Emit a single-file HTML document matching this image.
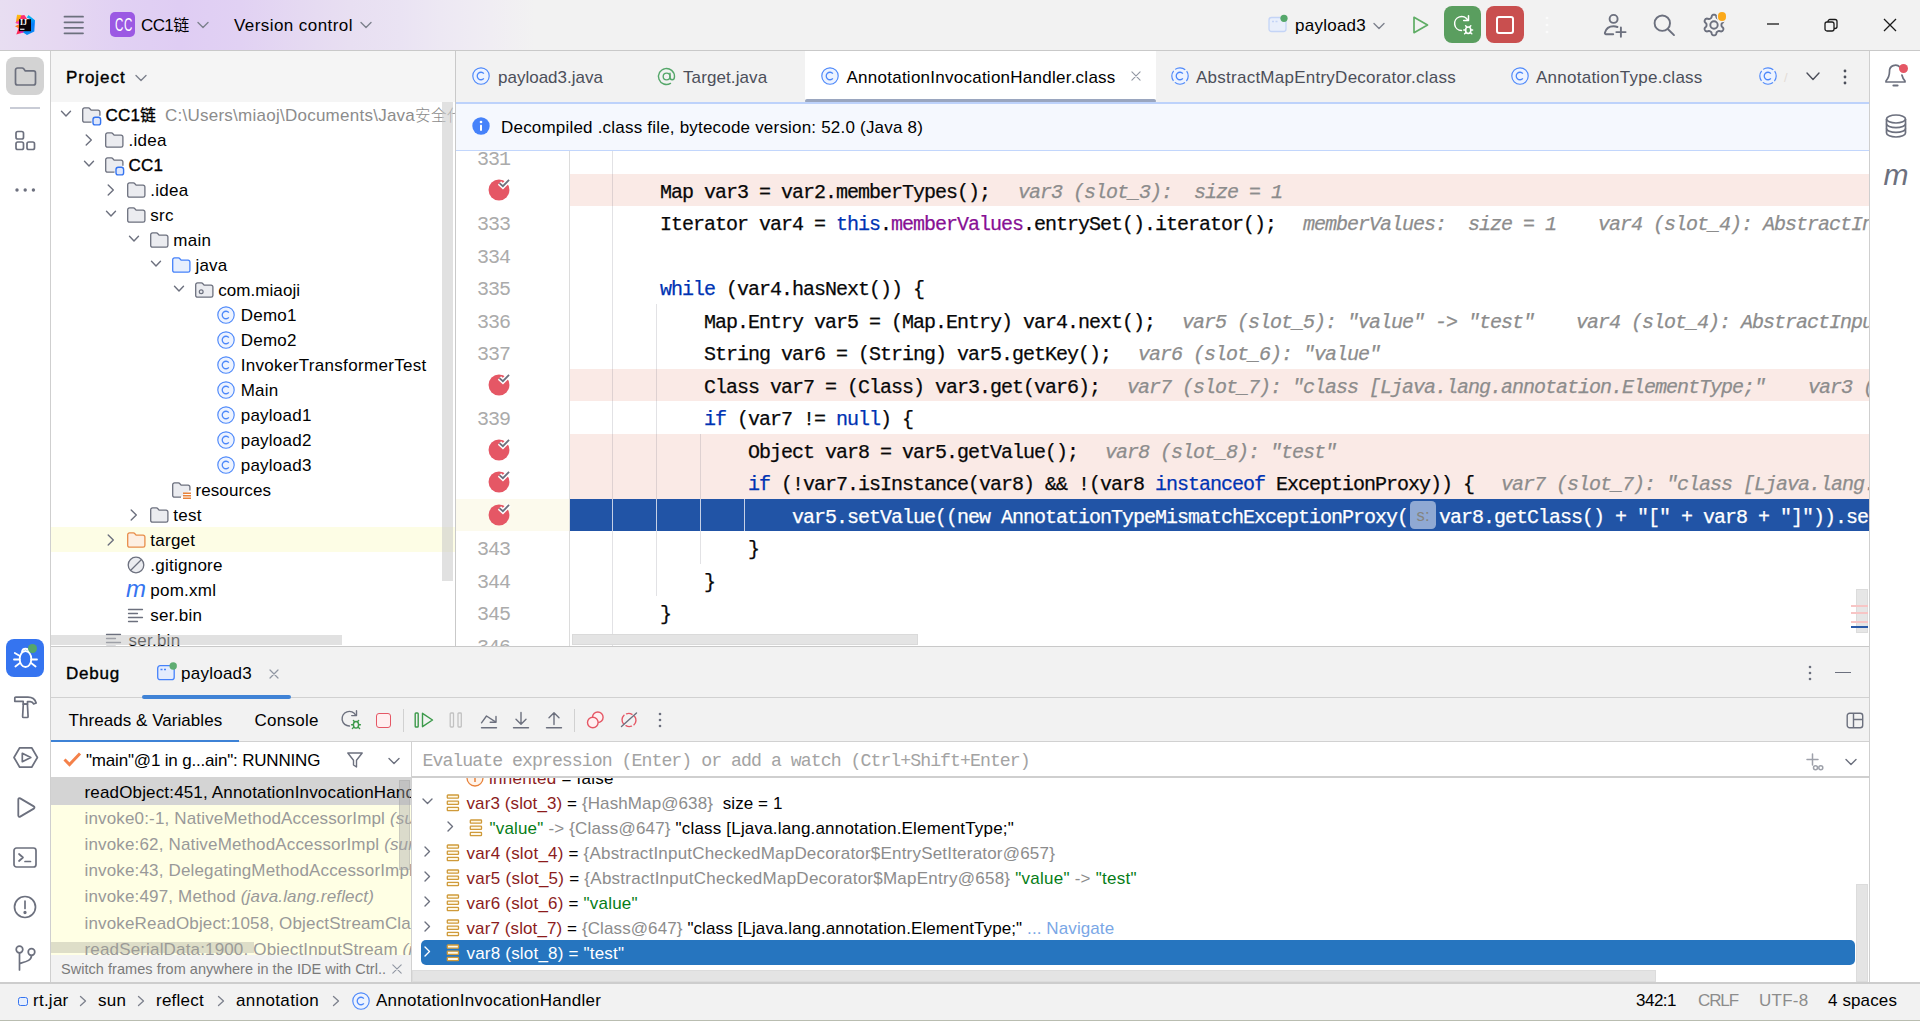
<!DOCTYPE html>
<html lang="en">
<head>
<meta charset="utf-8">
<title>CC1链 – AnnotationInvocationHandler.class</title>
<style>
*{box-sizing:border-box}
html,body{margin:0;padding:0}
body{width:1920px;height:1021px;overflow:hidden;position:relative;background:#fff;color:#000;
 font-family:"Liberation Sans","Noto Sans CJK SC",sans-serif;font-size:17px;letter-spacing:.25px;}
.abs{position:absolute}
.t{position:absolute;white-space:pre;line-height:25px;height:25px}
.b{font-weight:400;-webkit-text-stroke:.38px currentColor}
.mono{font-family:"Liberation Mono","Noto Sans CJK SC",monospace}
svg{position:absolute;overflow:visible}
/* title bar */
#title{left:0;top:0;width:1920px;height:50px;background:linear-gradient(90deg,#e8def2 0px,#e6d8f2 60px,#e1d1f3 120px,#dfcdf3 180px,#e1d1f3 240px,#e5d9f2 300px,#e8dff2 350px,#eae3f3 400px,#ede8f3 440px,#f0edf3 490px,#f2f2f2 535px,#f2f2f2 100%)}
#titleline{left:0;top:50px;width:1920px;height:1px;background:#c9c9c9}
/* left strip */
#lstrip{left:0;top:51px;width:50px;height:932px;background:#fff}
#lstripline{left:50px;top:51px;width:1px;height:932px;background:#cfcfcf}
/* project */
#phead{left:51px;top:51px;width:404px;height:51px;background:#f5f5f5}
#ptree{left:51px;top:102px;width:404px;height:544px;background:#fff;overflow:hidden}
#pline{left:455px;top:51px;width:1px;height:596px;background:#c9c9c9}
.row{position:absolute;left:0;width:404px;height:25px}
/* editor */
#tabs{left:456px;top:51px;width:1413px;height:51px;background:#f2f2f2}
#banner{left:456px;top:102px;width:1413px;height:49px;background:#f5f8fe;border-top:2px solid #bdd2fb;border-bottom:1px solid #c2d6fc}
#code{left:456px;top:151px;width:1413px;height:495px;background:#fff;overflow:hidden}
.cl{position:absolute;left:114px;width:1299px}
.ln{position:absolute;left:0;width:54px;text-align:right;color:#ababab;padding-top:2.500px;font-family:"Liberation Mono",monospace;font-size:20px;letter-spacing:-1px;white-space:pre}
.c{position:absolute;white-space:pre;font-family:"Liberation Mono",monospace;font-size:20px;letter-spacing:-1px;color:#080808;padding-top:2.500px;-webkit-text-stroke:.25px currentColor}
.k{color:#0033b3}.f{color:#871094}.h{color:#8c8c8c;font-style:italic}
.guide{position:absolute;width:1px;background:#dcdcdc}
/* right strip */
#rline{left:1869px;top:51px;width:1px;height:932px;background:#cfcfcf}
#rstrip{left:1870px;top:51px;width:50px;height:932px;background:#fff}
/* debug */
#dtop{left:51px;top:646px;width:1818px;height:1px;background:#c9c9c9}
#dhead{left:51px;top:647px;width:1818px;height:50px;background:#f2f2f2}
#dheadline{left:51px;top:697px;width:1818px;height:1px;background:#d1d1d1}
#dtool{left:51px;top:698px;width:1818px;height:43px;background:#f2f2f2}
#dtoolline{left:51px;top:741px;width:1818px;height:1px;background:#d1d1d1}
#dbody{left:51px;top:742px;width:1818px;height:240px;background:#fff;overflow:hidden}
/* status */
#sline{left:0;top:982px;width:1920px;height:1.700px;background:#cdcdcd;z-index:5}
#status{left:0;top:983px;width:1920px;height:38px;background:#f2f2f2}
.g{color:#8c8c8c}
.vn{color:#8c1c1c}.vs{color:#067d17}
</style>
</head>
<body>
<!-- ===== TITLE BAR ===== -->
<div id="title" class="abs">
 <!-- IJ logo -->
 <svg style="left:14px;top:14px" width="22" height="22" viewBox="0 0 22 22">
  <defs><linearGradient id="lgb" x1="0" y1="0" x2="0" y2="1"><stop offset="0" stop-color="#07c3f2"/><stop offset=".45" stop-color="#087cfa"/><stop offset="1" stop-color="#0a8af5"/></linearGradient>
  <linearGradient id="lgy" x1="0" y1="0" x2="0" y2="1"><stop offset="0" stop-color="#fdc20f"/><stop offset="1" stop-color="#fc801d"/></linearGradient></defs>
  <polygon points="3,.800 7.500,1 6,6 5.500,9.500 1.800,9.300" fill="url(#lgy)"/>
  <polygon points="7,1.600 10.300,1 13,4.800 5.500,6.500" fill="#fe2d6c"/>
  <polygon points="1.200,8.700 6,6 6,10.500" fill="#fb3bb5"/>
  <polygon points="1,12.300 6,9.800 6,15" fill="#fc7a1e"/>
  <polygon points="4.800,13.500 10,17 9,18.500 2.300,20.500" fill="#fe2857"/>
  <polygon points="6,17 10,17 9,18.800 6.500,19.200" fill="#e72ac0"/>
  <polygon points="12.800,3.500 14.500,1.100 21,6.300 20.300,17.400 13,21 8.800,18.300 12,16 16,5" fill="url(#lgb)"/>
  <rect x="5" y="5.200" width="12" height="12" fill="#0b0306"/>
  <text x="6" y="11.300" font-family="Liberation Serif,serif" font-weight="700" font-size="8" fill="#fff" letter-spacing="0">IJ</text>
  <rect x="6.100" y="14.700" width="4.400" height="1.100" fill="#fff"/>
 </svg>
 <!-- hamburger -->
 <svg style="left:63px;top:14px" width="22" height="22" viewBox="0 0 22 22" fill="none" stroke="#6c707e" stroke-width="1.800" stroke-linecap="round">
  <path d="M1.5 2.7H20M1.5 8.3H20M1.5 13.8H20M1.5 19.3H20"/>
 </svg>
 <!-- CC badge -->
 <div class="abs" style="left:109.5px;top:12px;width:25px;height:25px;border-radius:5px;background:#9b59e3"></div>
 <div class="t b" style="left:109.5px;top:12px;width:25px;text-align:center;color:#fff;font-size:17.500px;letter-spacing:1px;transform:scaleX(.66);font-weight:400;-webkit-text-stroke:0;padding-left:1px;top:12.500px">CC</div>
 <div class="t" style="left:141px;top:12.500px;letter-spacing:-.6px">CC1<span style="letter-spacing:0;font-size:16px">链</span></div>
 <svg style="left:197px;top:21px" width="12" height="8" viewBox="0 0 12 8" fill="none" stroke="#7d818d" stroke-width="1.4" stroke-linecap="round" stroke-linejoin="round"><path d="M1 1.5 6 6.5 11 1.5"/></svg>
 <div class="t" style="letter-spacing:0.43px;left:234px;top:12.500px">Version control</div>
 <svg style="left:360px;top:21px" width="12" height="8" viewBox="0 0 12 8" fill="none" stroke="#7d818d" stroke-width="1.4" stroke-linecap="round" stroke-linejoin="round"><path d="M1 1.5 6 6.5 11 1.5"/></svg>

 <!-- run config -->
 <svg style="left:1268px;top:14px" width="22" height="22" viewBox="0 0 22 22" fill="none">
  <rect x="1" y="3.5" width="17" height="14" rx="2.5" fill="#e9effb" stroke="#c4d4f6" stroke-width="1.3"/>
  <path d="M4 7.5h2M7.5 7.5h2" stroke="#c4d4f6" stroke-width="1.3"/>
  <circle cx="16" cy="4.3" r="3.6" fill="#55a76a"/>
 </svg>
 <div class="t" style="left:1295px;top:12.500px">payload3</div>
 <svg style="left:1373px;top:22px" width="12" height="8" viewBox="0 0 12 8" fill="none" stroke="#7d818d" stroke-width="1.4" stroke-linecap="round" stroke-linejoin="round"><path d="M1 1.5 6 6.5 11 1.5"/></svg>
 <!-- run -->
 <svg style="left:1410px;top:14px" width="22" height="22" viewBox="0 0 22 22" fill="none" stroke="#5fad65" stroke-width="1.7" stroke-linejoin="round"><path d="M4 3.3 17.5 11 4 18.7Z"/></svg>
 <!-- debug button (green) -->
 <div class="abs" style="left:1444px;top:6px;width:37px;height:37px;border-radius:8px;background:#5a9e5f"></div>
 <svg style="left:1452px;top:13px" width="24" height="24" viewBox="0 0 24 24" fill="none" stroke="#fff" stroke-width="1.5" stroke-linecap="round" stroke-linejoin="round">
  <path d="M9.5 17.5A7 7 0 1 1 15.8 7.2"/><path d="M16.5 2.8v4.8h-4.8"/>
  <ellipse cx="16.2" cy="17.2" rx="2.6" ry="3.2"/><path d="M14.6 13.8l-1-1M17.8 13.8l1-1M13.6 17h-1.8M18.8 17h1.8M14 19.6l-1.4 1.2M18.4 19.6l1.4 1.2"/>
 </svg>
 <!-- stop button (red) -->
 <div class="abs" style="left:1486px;top:6px;width:38px;height:37px;border-radius:8px;background:#c94f4f"></div>
 <div class="abs" style="left:1496px;top:16px;width:18px;height:18px;border-radius:3px;border:2px solid #fff"></div>
 <!-- kebab faded -->
 <svg style="left:1544px;top:15px" width="6" height="20" viewBox="0 0 6 20" fill="#fbfbfb"><circle cx="3" cy="3" r="1.3"/><circle cx="3" cy="10" r="1.3"/><circle cx="3" cy="17" r="1.3"/></svg>
 <!-- add user -->
 <svg style="left:1601px;top:11px" width="28" height="28" viewBox="0 0 28 28" fill="none" stroke="#6c707e" stroke-width="1.900" stroke-linecap="round" stroke-linejoin="round">
  <circle cx="12.600" cy="7.900" r="4"/><path d="M12.200 23.200H5c-.8 0-1.300-.7-1.100-1.500 1-3.900 4.300-6.500 8.700-6.500 1.400 0 2.700.3 3.900.8"/><path d="M19.900 16.400v9.300M15.300 21.100h9.300"/>
 </svg>
 <!-- search -->
 <svg style="left:1650px;top:11px" width="28" height="28" viewBox="0 0 28 28" fill="none" stroke="#6c707e" stroke-width="1.900" stroke-linecap="round"><circle cx="12.300" cy="12.200" r="7.700"/><path d="M18 18.200 24 24.100"/></svg>
 <!-- gear -->
 <svg style="left:1701.500px;top:12.700px" width="24" height="24" viewBox="0 0 24 24" fill="none" stroke="#6c707e" stroke-width="1.900" stroke-linejoin="round">
  <circle cx="12" cy="12" r="3.700"/>
  <path d="M19.45 12.00 19.46 11.51 19.53 11.01 19.83 10.44 20.60 9.70 21.29 8.85 21.43 8.09 21.26 7.43 20.96 6.83 20.59 6.26 20.10 5.79 19.38 5.53 18.29 5.71 17.27 6.00 16.62 5.98 16.15 5.78 15.73 5.55 15.31 5.30 14.91 4.99 14.57 4.44 14.30 3.40 13.91 2.37 13.33 1.88 12.68 1.70 12.00 1.65 11.32 1.70 10.67 1.88 10.09 2.37 9.70 3.40 9.43 4.44 9.09 4.99 8.69 5.30 8.28 5.55 7.85 5.78 7.38 5.98 6.73 6.00 5.71 5.71 4.62 5.53 3.90 5.79 3.41 6.26 3.04 6.83 2.74 7.43 2.57 8.09 2.71 8.85 3.40 9.70 4.17 10.44 4.47 11.01 4.54 11.51 4.55 12.00 4.54 12.49 4.47 12.99 4.17 13.56 3.40 14.30 2.71 15.15 2.57 15.91 2.74 16.57 3.04 17.17 3.41 17.74 3.90 18.21 4.62 18.47 5.71 18.29 6.73 18.00 7.38 18.02 7.85 18.22 8.27 18.45 8.69 18.70 9.09 19.01 9.43 19.56 9.70 20.60 10.09 21.63 10.67 22.12 11.32 22.30 12.00 22.35 12.68 22.30 13.33 22.12 13.91 21.63 14.30 20.60 14.57 19.56 14.91 19.01 15.31 18.70 15.73 18.45 16.15 18.22 16.62 18.02 17.27 18.00 18.29 18.29 19.38 18.47 20.10 18.21 20.59 17.74 20.96 17.18 21.26 16.57 21.43 15.91 21.29 15.15 20.60 14.30 19.83 13.56 19.53 12.99 19.46 12.49Z"/>
 </svg>
 <div class="abs" style="left:1717.500px;top:12.300px;width:8.800px;height:8.800px;border-radius:50%;background:#fba91a;box-shadow:0 0 0 1.200px #f2f2f2"></div>
 <!-- window controls -->
 <svg style="left:1766px;top:18px" width="14" height="14" viewBox="0 0 14 14" stroke="#1a1a1a" stroke-width="1.300" fill="none"><path d="M1 6h12"/></svg>
 <svg style="left:1824px;top:18px" width="14" height="14" viewBox="0 0 14 14" stroke="#1a1a1a" stroke-width="1.300" fill="none"><rect x="1" y="4" width="9" height="9" rx="2"/><path d="M4 4V3.500a2 2 0 0 1 2-2h5a2 2 0 0 1 2 2v5a2 2 0 0 1-2 2h-1"/></svg>
 <svg style="left:1883px;top:18px" width="14" height="14" viewBox="0 0 14 14" stroke="#1a1a1a" stroke-width="1.300" fill="none"><path d="M1 1 13 13M13 1 1 13"/></svg>
</div>
<div id="titleline" class="abs"></div>
<!-- ===== LEFT STRIP ===== -->
<div id="lstrip" class="abs"></div><div id="lstripline" class="abs"></div>
<!-- ===== PROJECT ===== -->
<div id="phead" class="abs"><div class="t b" style="left:15px;top:13.500px;letter-spacing:.95px">Project</div><svg style="left:84px;top:23px" width="12" height="8" viewBox="0 0 12 8" fill="none" stroke="#7d818d" stroke-width="1.400" stroke-linecap="round" stroke-linejoin="round"><path d="M1 1.500 6 6.500 11 1.500"/></svg></div>
<div id="ptree" class="abs">
<svg style="left:8.95px;top:8.40px" width="12" height="8" viewBox="0 0 12 8" fill="none" stroke="#6c707e" stroke-width="1.400" stroke-linecap="round" stroke-linejoin="round"><path d="M1.500 1.300 6 6.100 10.500 1.300"/></svg>
<svg style="left:31.099999999999994px;top:5px" width="20" height="19" viewBox="0 0 20 19" fill="#ebecf0" stroke="#6c707e" stroke-width="1.300" stroke-linejoin="round"><path d="M9.500 15.200H2.500a1.800 1.800 0 0 1-1.800-1.800V2.700a1.800 1.800 0 0 1 1.800-1.800h3.900c.5 0 1 .200 1.300.6l1.400 1.700h7a1.800 1.800 0 0 1 1.800 1.800v3.700"/><rect x="11" y="10.300" width="7.600" height="7.600" rx="2.200" fill="#dfe7fb" stroke="#3574f0" stroke-width="1.400"/></svg>
<div class="t b" style="left:54.39999999999999px;top:1px">CC1<span style="font-size:15.500px">链</span></div>
<div class="t g" style="left:114px;top:1px;color:#8c8c8c">C:\Users\miaoj\Documents\Java<span style="font-size:15.500px;font-weight:300;letter-spacing:.5px">安全代码</span></div>
<svg style="left:33.70px;top:31.95px" width="8" height="12" viewBox="0 0 8 12" fill="none" stroke="#6c707e" stroke-width="1.400" stroke-linecap="round" stroke-linejoin="round"><path d="M1.200 1 6.300 6 1.200 11"/></svg>
<svg style="left:54.2px;top:30px" width="19" height="17" viewBox="0 0 19 17" fill="#ebecf0" stroke="#6c707e" stroke-width="1.300" stroke-linejoin="round"><path d="M.700 2.700a1.800 1.800 0 0 1 1.800-1.800h3.900c.5 0 1 .200 1.300.6l1.400 1.700h7a1.800 1.800 0 0 1 1.800 1.800v8.400a1.800 1.800 0 0 1-1.800 1.800H2.500a1.800 1.800 0 0 1-1.800-1.800z"/></svg>
<div class="t" style="left:77.5px;top:26px">.idea</div>
<svg style="left:32.05px;top:58.40px" width="12" height="8" viewBox="0 0 12 8" fill="none" stroke="#6c707e" stroke-width="1.400" stroke-linecap="round" stroke-linejoin="round"><path d="M1.500 1.300 6 6.100 10.500 1.300"/></svg>
<svg style="left:54.2px;top:55px" width="20" height="19" viewBox="0 0 20 19" fill="#ebecf0" stroke="#6c707e" stroke-width="1.300" stroke-linejoin="round"><path d="M9.500 15.200H2.500a1.800 1.800 0 0 1-1.800-1.800V2.700a1.800 1.800 0 0 1 1.800-1.800h3.900c.5 0 1 .200 1.300.6l1.400 1.700h7a1.800 1.800 0 0 1 1.800 1.800v3.700"/><rect x="11" y="10.300" width="7.600" height="7.600" rx="2.200" fill="#dfe7fb" stroke="#3574f0" stroke-width="1.400"/></svg>
<div class="t b" style="left:77.5px;top:51px">CC1</div>
<svg style="left:55.50px;top:81.95px" width="8" height="12" viewBox="0 0 8 12" fill="none" stroke="#6c707e" stroke-width="1.400" stroke-linecap="round" stroke-linejoin="round"><path d="M1.200 1 6.300 6 1.200 11"/></svg>
<svg style="left:76px;top:80px" width="19" height="17" viewBox="0 0 19 17" fill="#ebecf0" stroke="#6c707e" stroke-width="1.300" stroke-linejoin="round"><path d="M.700 2.700a1.800 1.800 0 0 1 1.800-1.800h3.900c.5 0 1 .200 1.300.6l1.400 1.700h7a1.800 1.800 0 0 1 1.800 1.800v8.400a1.800 1.800 0 0 1-1.800 1.800H2.500a1.800 1.800 0 0 1-1.800-1.800z"/></svg>
<div class="t" style="left:99.3px;top:76px">.idea</div>
<svg style="left:53.85px;top:108.40px" width="12" height="8" viewBox="0 0 12 8" fill="none" stroke="#6c707e" stroke-width="1.400" stroke-linecap="round" stroke-linejoin="round"><path d="M1.500 1.300 6 6.100 10.500 1.300"/></svg>
<svg style="left:76px;top:105px" width="19" height="17" viewBox="0 0 19 17" fill="#ebecf0" stroke="#6c707e" stroke-width="1.300" stroke-linejoin="round"><path d="M.700 2.700a1.800 1.800 0 0 1 1.800-1.800h3.900c.5 0 1 .200 1.300.6l1.400 1.700h7a1.800 1.800 0 0 1 1.800 1.800v8.400a1.800 1.800 0 0 1-1.800 1.800H2.500a1.800 1.800 0 0 1-1.800-1.800z"/></svg>
<div class="t" style="left:99.3px;top:101px">src</div>
<svg style="left:76.85px;top:133.40px" width="12" height="8" viewBox="0 0 12 8" fill="none" stroke="#6c707e" stroke-width="1.400" stroke-linecap="round" stroke-linejoin="round"><path d="M1.500 1.300 6 6.100 10.500 1.300"/></svg>
<svg style="left:99px;top:130px" width="19" height="17" viewBox="0 0 19 17" fill="#ebecf0" stroke="#6c707e" stroke-width="1.300" stroke-linejoin="round"><path d="M.700 2.700a1.800 1.800 0 0 1 1.800-1.800h3.900c.5 0 1 .200 1.300.6l1.400 1.700h7a1.800 1.800 0 0 1 1.800 1.800v8.400a1.800 1.800 0 0 1-1.800 1.800H2.500a1.800 1.800 0 0 1-1.800-1.800z"/></svg>
<div class="t" style="left:122.3px;top:126px">main</div>
<svg style="left:98.95px;top:158.40px" width="12" height="8" viewBox="0 0 12 8" fill="none" stroke="#6c707e" stroke-width="1.400" stroke-linecap="round" stroke-linejoin="round"><path d="M1.500 1.300 6 6.100 10.500 1.300"/></svg>
<svg style="left:121.1px;top:155px" width="19" height="17" viewBox="0 0 19 17" fill="#e7effd" stroke="#4682fa" stroke-width="1.300" stroke-linejoin="round"><path d="M.700 2.700a1.800 1.800 0 0 1 1.800-1.800h3.900c.5 0 1 .200 1.300.6l1.400 1.700h7a1.800 1.800 0 0 1 1.800 1.800v8.400a1.800 1.800 0 0 1-1.800 1.800H2.500a1.800 1.800 0 0 1-1.800-1.800z"/></svg>
<div class="t" style="left:144.4px;top:151px">java</div>
<svg style="left:121.85px;top:183.40px" width="12" height="8" viewBox="0 0 12 8" fill="none" stroke="#6c707e" stroke-width="1.400" stroke-linecap="round" stroke-linejoin="round"><path d="M1.500 1.300 6 6.100 10.500 1.300"/></svg>
<svg style="left:144px;top:180px" width="19" height="17" viewBox="0 0 19 17" fill="#ebecf0" stroke="#6c707e" stroke-width="1.300" stroke-linejoin="round"><path d="M.700 2.700a1.800 1.800 0 0 1 1.800-1.800h3.900c.5 0 1 .200 1.300.6l1.400 1.700h7a1.800 1.800 0 0 1 1.800 1.800v8.400a1.800 1.800 0 0 1-1.800 1.800H2.500a1.800 1.800 0 0 1-1.800-1.800z"/><circle cx="6.200" cy="9.800" r="1.900" fill="none" stroke-width="1.200"/></svg>
<div class="t" style="letter-spacing:0.05px;left:167.3px;top:176px">com.miaoji</div>
<svg style="left:166.4px;top:203.7px" width="18" height="18" viewBox="0 0 18 18" fill="none"><circle cx="9" cy="9" r="8.200" fill="#edf3ff" stroke="#4d88fa" stroke-width="1.150"/><path d="M11.850 6.600A3.750 3.750 0 1 0 11.850 11.400" stroke="#4d88fa" stroke-width="1.300" fill="none"/></svg>
<div class="t" style="left:189.70000000000002px;top:201px">Demo1</div>
<svg style="left:166.4px;top:228.7px" width="18" height="18" viewBox="0 0 18 18" fill="none"><circle cx="9" cy="9" r="8.200" fill="#edf3ff" stroke="#4d88fa" stroke-width="1.150"/><path d="M11.850 6.600A3.750 3.750 0 1 0 11.850 11.400" stroke="#4d88fa" stroke-width="1.300" fill="none"/></svg>
<div class="t" style="left:189.70000000000002px;top:226px">Demo2</div>
<svg style="left:166.4px;top:253.7px" width="18" height="18" viewBox="0 0 18 18" fill="none"><circle cx="9" cy="9" r="8.200" fill="#edf3ff" stroke="#4d88fa" stroke-width="1.150"/><path d="M11.850 6.600A3.750 3.750 0 1 0 11.850 11.400" stroke="#4d88fa" stroke-width="1.300" fill="none"/></svg>
<div class="t" style="letter-spacing:0.32px;left:189.70000000000002px;top:251px">InvokerTransformerTest</div>
<svg style="left:166.4px;top:278.7px" width="18" height="18" viewBox="0 0 18 18" fill="none"><circle cx="9" cy="9" r="8.200" fill="#edf3ff" stroke="#4d88fa" stroke-width="1.150"/><path d="M11.850 6.600A3.750 3.750 0 1 0 11.850 11.400" stroke="#4d88fa" stroke-width="1.300" fill="none"/></svg>
<div class="t" style="left:189.70000000000002px;top:276px">Main</div>
<svg style="left:166.4px;top:303.7px" width="18" height="18" viewBox="0 0 18 18" fill="none"><circle cx="9" cy="9" r="8.200" fill="#edf3ff" stroke="#4d88fa" stroke-width="1.150"/><path d="M11.850 6.600A3.750 3.750 0 1 0 11.850 11.400" stroke="#4d88fa" stroke-width="1.300" fill="none"/></svg>
<div class="t" style="left:189.70000000000002px;top:301px">payload1</div>
<svg style="left:166.4px;top:328.7px" width="18" height="18" viewBox="0 0 18 18" fill="none"><circle cx="9" cy="9" r="8.200" fill="#edf3ff" stroke="#4d88fa" stroke-width="1.150"/><path d="M11.850 6.600A3.750 3.750 0 1 0 11.850 11.400" stroke="#4d88fa" stroke-width="1.300" fill="none"/></svg>
<div class="t" style="left:189.70000000000002px;top:326px">payload2</div>
<svg style="left:166.4px;top:353.7px" width="18" height="18" viewBox="0 0 18 18" fill="none"><circle cx="9" cy="9" r="8.200" fill="#edf3ff" stroke="#4d88fa" stroke-width="1.150"/><path d="M11.850 6.600A3.750 3.750 0 1 0 11.850 11.400" stroke="#4d88fa" stroke-width="1.300" fill="none"/></svg>
<div class="t" style="left:189.70000000000002px;top:351px">payload3</div>
<svg style="left:121.1px;top:380px" width="20" height="19" viewBox="0 0 20 19" fill="#ebecf0" stroke="#6c707e" stroke-width="1.300" stroke-linejoin="round"><path d="M9 15.200H2.500a1.800 1.800 0 0 1-1.800-1.800V2.700a1.800 1.800 0 0 1 1.800-1.800h3.900c.5 0 1 .200 1.300.6l1.400 1.700h7a1.800 1.800 0 0 1 1.800 1.800v3.400"/><path d="M11 11.300h8M11 13.800h8M11 16.300h8" stroke="#e8823a" stroke-width="1.400" fill="none"/></svg>
<div class="t" style="letter-spacing:0.12px;left:144.4px;top:376px">resources</div>
<svg style="left:78.50px;top:406.95px" width="8" height="12" viewBox="0 0 8 12" fill="none" stroke="#6c707e" stroke-width="1.400" stroke-linecap="round" stroke-linejoin="round"><path d="M1.200 1 6.300 6 1.200 11"/></svg>
<svg style="left:99px;top:405px" width="19" height="17" viewBox="0 0 19 17" fill="#ebecf0" stroke="#6c707e" stroke-width="1.300" stroke-linejoin="round"><path d="M.700 2.700a1.800 1.800 0 0 1 1.800-1.800h3.900c.5 0 1 .200 1.300.6l1.400 1.700h7a1.800 1.800 0 0 1 1.800 1.800v8.400a1.800 1.800 0 0 1-1.800 1.800H2.500a1.800 1.800 0 0 1-1.800-1.800z"/></svg>
<div class="t" style="left:122.3px;top:401px">test</div>
<div class="row" style="top:425px;background:#fdfde5"></div>
<svg style="left:55.50px;top:431.95px" width="8" height="12" viewBox="0 0 8 12" fill="none" stroke="#6c707e" stroke-width="1.400" stroke-linecap="round" stroke-linejoin="round"><path d="M1.200 1 6.300 6 1.200 11"/></svg>
<svg style="left:76px;top:430px" width="19" height="17" viewBox="0 0 19 17" fill="#fdefe2" stroke="#e88d4a" stroke-width="1.300" stroke-linejoin="round"><path d="M.700 2.700a1.800 1.800 0 0 1 1.800-1.800h3.900c.5 0 1 .200 1.300.6l1.400 1.700h7a1.800 1.800 0 0 1 1.800 1.800v8.400a1.800 1.800 0 0 1-1.800 1.800H2.500a1.800 1.800 0 0 1-1.800-1.800z"/></svg>
<div class="t" style="left:99.3px;top:426px">target</div>
<svg style="left:76px;top:453.6px" width="18" height="18" viewBox="0 0 18 18" fill="#ebecf0" stroke="#6c707e" stroke-width="1.300"><circle cx="9" cy="9" r="7.800"/><path d="M3.500 14.500 14.500 3.500"/></svg>
<div class="t" style="left:99.3px;top:451px">.gitignore</div>
<div class="t" style="left:75px;top:474px;color:#3574f0;font-style:italic;font-size:24px;letter-spacing:0;font-family:'Liberation Sans',sans-serif">m</div>
<div class="t" style="left:99.3px;top:476px">pom.xml</div>
<svg style="left:76px;top:506px" width="18" height="15" viewBox="0 0 18 15" fill="none" stroke="#6c707e" stroke-width="1.300" stroke-linecap="round"><path d="M1.500 1.500h14M1.500 5.500h9M1.500 9.500h14M1.500 13.500h9"/></svg>
<div class="t" style="left:99.3px;top:501px">ser.bin</div>
<svg style="left:54.2px;top:531px" width="18" height="15" viewBox="0 0 18 15" fill="none" stroke="#6c707e" stroke-width="1.300" stroke-linecap="round"><path d="M1.500 1.500h14M1.500 5.500h9M1.500 9.500h14M1.500 13.500h9"/></svg>
<div class="t" style="left:77.5px;top:526px">ser.bin</div>
<div class="abs" style="left:391px;top:0;width:11px;height:479px;background:rgba(200,200,200,.55)"></div>
<div class="abs" style="left:0;top:532.500px;width:291px;height:10.500px;background:rgba(200,200,200,.55)"></div>
</div>
<div id="pline" class="abs"></div>
<!-- ===== LEFT STRIP ICONS ===== -->
<div class="abs" style="left:6px;top:57px;width:38px;height:38px;border-radius:8px;background:#d3d3d3"></div>
<svg style="left:14px;top:66px" width="23" height="21" viewBox="0 0 23 21" fill="none" stroke="#6c707e" stroke-width="1.700" stroke-linejoin="round"><path d="M1.500 4a2 2 0 0 1 2-2h4.600c.6 0 1.200.3 1.600.8l1.600 2.100h8.200a2 2 0 0 1 2 2v10.100a2 2 0 0 1-2 2H3.500a2 2 0 0 1-2-2z"/></svg>
<div class="abs" style="left:10px;top:107px;width:30px;height:1.500px;background:#c9ccd6"></div>
<svg style="left:14px;top:130px" width="24" height="22" viewBox="0 0 24 22" fill="none" stroke="#6c707e" stroke-width="1.700"><rect x="2" y="1.500" width="7.500" height="7.500" rx="1.800"/><rect x="2" y="12" width="7.500" height="7.500" rx="1.800"/><rect x="13" y="12" width="7.500" height="7.500" rx="1.800"/></svg>
<svg style="left:14px;top:187px" width="24" height="6" viewBox="0 0 24 6" fill="#6c707e"><circle cx="3" cy="3" r="1.700"/><circle cx="11.200" cy="3" r="1.700"/><circle cx="19.400" cy="3" r="1.700"/></svg>
<!-- debug button -->
<div class="abs" style="left:6px;top:639px;width:38px;height:38px;border-radius:8px;background:#3574f0"></div>
<svg style="left:13px;top:646px" width="25" height="25" viewBox="0 0 25 25" fill="none" stroke="#fff" stroke-width="1.800" stroke-linecap="round">
 <path d="M9 5.500a3.600 3.600 0 0 1 7 0"/><ellipse cx="12.500" cy="13" rx="5.800" ry="8"/><path d="M6.900 10 1.800 7M6.700 13.500H1M6.900 17l-4.500 3.500M18.100 13.500H24M18.100 17l4.500 3.500"/>
</svg>

<div class="abs" style="left:27.500px;top:643.500px;width:9px;height:9px;border-radius:50%;background:#55a76a"></div>
<!-- hammer -->
<svg style="left:13px;top:695px" width="26" height="26" viewBox="0 0 26 26" fill="none" stroke="#6c707e" stroke-width="1.700" stroke-linejoin="round" stroke-linecap="round"><path d="M1.800 6.300V3.200c0-.6.400-1 1-1H15c4 0 7 2 8.200 5.800l-2.600.9c-.7-1.500-1.800-2.300-3.400-2.300h-2.700v2.600h-4.300V6.300z"/><path d="M10.300 9.200h4.100l.7 12.300c0 .6-.4 1-1 1h-3.500c-.6 0-1-.4-1-1z"/></svg>
<!-- services -->
<svg style="left:12px;top:745px" width="28" height="26" viewBox="0 0 28 26" fill="none" stroke="#6c707e" stroke-width="1.700" stroke-linejoin="round"><path d="M2 12.500 7.700 2.800h12l5.700 9.700-5.700 9.700h-12z"/><path d="M10.300 8.300 18.800 12.500l-8.500 4.200z"/></svg>
<!-- run -->
<svg style="left:15px;top:795px" width="24" height="26" viewBox="0 0 24 26" fill="none" stroke="#6c707e" stroke-width="1.800" stroke-linejoin="round"><path d="M3.300 4.500c0-1 1-1.600 1.900-1.100l13.600 8c.9.500.9 1.700 0 2.200l-13.600 8c-.9.500-1.900-.1-1.900-1.100z"/></svg>
<!-- terminal -->
<svg style="left:12px;top:846px" width="26" height="24" viewBox="0 0 26 24" fill="none" stroke="#6c707e" stroke-width="1.700" stroke-linejoin="round" stroke-linecap="round"><rect x="2" y="2" width="22" height="19" rx="2.500"/><path d="M7 8l4 3.500L7 15M13 15.500h5.500"/></svg>
<!-- problems -->
<svg style="left:12px;top:894px" width="26" height="26" viewBox="0 0 26 26" fill="none" stroke="#6c707e" stroke-width="1.700" stroke-linecap="round"><circle cx="13" cy="13" r="10.500"/><path d="M13 7v7.500"/><circle cx="13" cy="18.500" r=".8" fill="#6c707e"/></svg>
<!-- git -->
<svg style="left:13px;top:944px" width="26" height="28" viewBox="0 0 26 28" fill="none" stroke="#6c707e" stroke-width="1.700" stroke-linecap="round"><circle cx="6.500" cy="5.500" r="3.300"/><circle cx="18.500" cy="8" r="3.300"/><path d="M6.500 9v17M18.500 11.500c0 5-5 6-12 8"/></svg>

<!-- ===== RIGHT STRIP ===== -->
<div id="rline" class="abs"></div><div id="rstrip" class="abs"></div>
<svg style="left:1884px;top:63px" width="24" height="26" viewBox="0 0 24 26" fill="none" stroke="#6c707e" stroke-width="1.700" stroke-linejoin="round" stroke-linecap="round"><path d="M16 4.200A6 6 0 0 0 5.500 8.500c0 4.500-1.800 7.500-3.500 9.500v1h19v-1c-1.200-1.400-2.500-3.300-3.100-6"/><path d="M9.500 22.500h4" stroke-width="2.200"/></svg>
<div class="abs" style="left:1898.500px;top:63.500px;width:9px;height:9px;border-radius:50%;background:#e55765"></div>
<svg style="left:1884px;top:113px" width="24" height="26" viewBox="0 0 24 26" fill="none" stroke="#6c707e" stroke-width="1.700"><ellipse cx="12" cy="6" rx="9.500" ry="4"/><path d="M2.500 6v14c0 2.200 4.300 4 9.500 4s9.500-1.800 9.500-4V6"/><path d="M2.500 10.700c0 2.200 4.300 4 9.500 4s9.500-1.800 9.500-4M2.500 15.400c0 2.200 4.300 4 9.500 4s9.500-1.800 9.500-4"/></svg>
<div class="t" style="left:1883.500px;top:159.500px;width:28px;color:#6c707e;font-style:italic;font-size:30px;letter-spacing:0;line-height:30px;height:30px">m</div>
<!-- ===== EDITOR TABS ===== -->
<div id="tabs" class="abs">
<svg style="left:16px;top:16px;opacity:1" width="18" height="18" viewBox="0 0 18 18" fill="none"><circle cx="9" cy="9" r="8.200" fill="#edf3ff" stroke="#4d88fa" stroke-width="1.150"/><path d="M11.850 6.600A3.750 3.750 0 1 0 11.850 11.400" stroke="#4d88fa" stroke-width="1.300" fill="none"/></svg>
<div class="t" style="letter-spacing:0.0px;left:42px;top:13.500px;color:#4c4f5a">payload3.java</div>
<svg style="left:201px;top:15.500px" width="19" height="19" viewBox="0 0 19 19" fill="none" stroke="#55a76a" stroke-width="1.400" stroke-linecap="round"><path d="M13.500 16.400A8 8 0 1 1 17.500 9.500c0 2-.9 3.300-2.300 3.300s-2.200-1-2.200-2.500V6.300"/><circle cx="9.600" cy="9.500" r="3.400"/></svg>
<div class="t" style="letter-spacing:0.1px;left:227px;top:13.500px;color:#4c4f5a">Target.java</div>
<div class="abs" style="left:349px;top:0;width:351px;height:49px;background:#fff"></div>
<div class="abs" style="left:349px;top:48px;width:351px;height:3.500px;border-radius:2px;background:#9aa6bf"></div>
<svg style="left:365px;top:16px;opacity:1" width="18" height="18" viewBox="0 0 18 18" fill="none"><circle cx="9" cy="9" r="8.200" fill="#edf3ff" stroke="#4d88fa" stroke-width="1.150"/><path d="M11.850 6.600A3.750 3.750 0 1 0 11.850 11.400" stroke="#4d88fa" stroke-width="1.300" fill="none"/></svg>
<div class="t" style="left:390.500px;top:13.500px;color:#000">AnnotationInvocationHandler.class</div>
<svg style="left:675.300px;top:20.200px" width="10" height="10" viewBox="0 0 11 11" stroke="#9096a2" stroke-width="1.200" fill="none" stroke-linecap="round"><path d="M1 1 10 10M10 1 1 10"/></svg>
<svg style="left:715px;top:16px;opacity:1" width="18" height="18" viewBox="0 0 18 18" fill="none"><circle cx="9" cy="9" r="8.200" fill="#edf3ff" stroke="#4d88fa" stroke-width="1.150" stroke-dasharray="10.880 2" stroke-dashoffset="5.440"/><path d="M11.850 6.600A3.750 3.750 0 1 0 11.850 11.400" stroke="#4d88fa" stroke-width="1.300" fill="none"/></svg>
<div class="t" style="left:740px;top:13.500px;color:#4c4f5a">AbstractMapEntryDecorator.class</div>
<svg style="left:1055px;top:16px;opacity:1" width="18" height="18" viewBox="0 0 18 18" fill="none"><circle cx="9" cy="9" r="8.200" fill="#edf3ff" stroke="#4d88fa" stroke-width="1.150"/><path d="M11.850 6.600A3.750 3.750 0 1 0 11.850 11.400" stroke="#4d88fa" stroke-width="1.300" fill="none"/></svg>
<div class="t" style="left:1080px;top:13.500px;color:#4c4f5a">AnnotationType.class</div>
<svg style="left:1303px;top:16px;opacity:1" width="18" height="18" viewBox="0 0 18 18" fill="none"><circle cx="9" cy="9" r="8.200" fill="#edf3ff" stroke="#4d88fa" stroke-width="1.150" stroke-dasharray="10.880 2" stroke-dashoffset="5.440"/><path d="M11.850 6.600A3.750 3.750 0 1 0 11.850 11.400" stroke="#4d88fa" stroke-width="1.300" fill="none"/></svg>
<div class="t" style="left:1328px;top:13.500px;color:#e3dcd6;font-size:13px">/</div>
<svg style="left:1350px;top:21px" width="14" height="9" viewBox="0 0 14 9" fill="none" stroke="#4c4f5a" stroke-width="1.400" stroke-linecap="round" stroke-linejoin="round"><path d="M1 1 7 7.500 13 1"/></svg>
<svg style="left:1386px;top:18px" width="6" height="16" viewBox="0 0 6 16" fill="#4c4f5a"><circle cx="3" cy="2" r="1.400"/><circle cx="3" cy="8" r="1.400"/><circle cx="3" cy="14" r="1.400"/></svg>
</div>
<!-- ===== BANNER ===== -->
<div id="banner" class="abs">
<svg style="left:16px;top:12.700px" width="18" height="18" viewBox="0 0 18 18"><circle cx="9" cy="9" r="8.700" fill="#4682fa"/><rect x="8" y="7.800" width="2" height="6" rx=".5" fill="#fff"/><circle cx="9" cy="5" r="1.300" fill="#fff"/></svg>
<div class="t" style="left:45px;top:10.500px;letter-spacing:.2px">Decompiled .class file, bytecode version: 52.0 (Java 8)</div>
</div>
<!-- ===== CODE ===== -->
<div id="code" class="abs">
<div class="abs" style="left:113px;top:23px;width:1300px;height:32px;background:#faeae6"></div>
<div class="abs" style="left:113px;top:218px;width:1300px;height:32px;background:#faeae6"></div>
<div class="abs" style="left:113px;top:283px;width:1300px;height:32px;background:#faeae6"></div>
<div class="abs" style="left:113px;top:315px;width:1300px;height:33px;background:#faeae6"></div>
<div class="abs" style="left:0;top:348px;width:113px;height:32px;background:#fcfaed"></div>
<div class="abs" style="left:114px;top:348px;width:1300px;height:32px;background:#2154a6"></div>
<div class="guide" style="left:113px;top:0;height:495px;background:#dcdcdc"></div>
<div class="guide" style="left:156px;top:-10px;height:553px;background:rgba(120,120,130,.21)"></div>
<div class="guide" style="left:200px;top:153px;height:292px;background:rgba(120,120,130,.21)"></div>
<div class="guide" style="left:244px;top:283px;height:130px;background:rgba(120,120,130,.21)"></div>
<div class="guide" style="left:156px;top:348px;height:32px;background:#c5d0e6"></div>
<div class="guide" style="left:200px;top:348px;height:32px;background:#c5d0e6"></div>
<div class="guide" style="left:244px;top:348px;height:32px;background:#c5d0e6"></div>
<div class="guide" style="left:288px;top:348px;height:32px;background:#c5d0e6"></div>
<div class="ln" style="top:-10px;line-height:32.500px;height:32.500px">331</div>
<svg style="left:31.15px;top:26.85px" width="24" height="24" viewBox="0 0 24 24"><circle cx="12" cy="12" r="10.450" fill="#e55765"/><path d="M12.450 5.050 15.900 8.250 22.050 1.950" fill="none" stroke="#fff" stroke-width="4.800" stroke-linecap="butt" stroke-linejoin="miter"/><path d="M12.450 5.050 15.900 8.250 22.050 1.950" fill="none" stroke="#6c707e" stroke-width="1.800"/></svg>
<div class="ln" style="top:55px;line-height:32.500px;height:32.500px">333</div>
<div class="ln" style="top:88px;line-height:32.500px;height:32.500px">334</div>
<div class="ln" style="top:120px;line-height:32.500px;height:32.500px">335</div>
<div class="ln" style="top:153px;line-height:32.500px;height:32.500px">336</div>
<div class="ln" style="top:185px;line-height:32.500px;height:32.500px">337</div>
<svg style="left:31.15px;top:221.85px" width="24" height="24" viewBox="0 0 24 24"><circle cx="12" cy="12" r="10.450" fill="#e55765"/><path d="M12.450 5.050 15.900 8.250 22.050 1.950" fill="none" stroke="#fff" stroke-width="4.800" stroke-linecap="butt" stroke-linejoin="miter"/><path d="M12.450 5.050 15.900 8.250 22.050 1.950" fill="none" stroke="#6c707e" stroke-width="1.800"/></svg>
<div class="ln" style="top:250px;line-height:32.500px;height:32.500px">339</div>
<svg style="left:31.15px;top:286.85px" width="24" height="24" viewBox="0 0 24 24"><circle cx="12" cy="12" r="10.450" fill="#e55765"/><path d="M12.450 5.050 15.900 8.250 22.050 1.950" fill="none" stroke="#fff" stroke-width="4.800" stroke-linecap="butt" stroke-linejoin="miter"/><path d="M12.450 5.050 15.900 8.250 22.050 1.950" fill="none" stroke="#6c707e" stroke-width="1.800"/></svg>
<svg style="left:31.15px;top:318.85px" width="24" height="24" viewBox="0 0 24 24"><circle cx="12" cy="12" r="10.450" fill="#e55765"/><path d="M12.450 5.050 15.900 8.250 22.050 1.950" fill="none" stroke="#fff" stroke-width="4.800" stroke-linecap="butt" stroke-linejoin="miter"/><path d="M12.450 5.050 15.900 8.250 22.050 1.950" fill="none" stroke="#6c707e" stroke-width="1.800"/></svg>
<svg style="left:31.15px;top:351.85px" width="24" height="24" viewBox="0 0 24 24"><circle cx="12" cy="12" r="10.450" fill="#e55765"/><path d="M12.450 5.050 15.900 8.250 22.050 1.950" fill="none" stroke="#fff" stroke-width="4.800" stroke-linecap="butt" stroke-linejoin="miter"/><path d="M12.450 5.050 15.900 8.250 22.050 1.950" fill="none" stroke="#6c707e" stroke-width="1.800"/></svg>
<div class="ln" style="top:380px;line-height:32.500px;height:32.500px">343</div>
<div class="ln" style="top:413px;line-height:32.500px;height:32.500px">344</div>
<div class="ln" style="top:445px;line-height:32.500px;height:32.500px">345</div>
<div class="ln" style="top:478px;line-height:32.500px;height:32.500px">346</div>
<div class="c" style="left:204px;top:23px;line-height:32.500px;height:32.500px">Map var3 = var2.memberTypes();</div>
<div class="c h" style="left:562px;top:23px;line-height:32.500px;height:32.500px">var3 (slot_3):  size = 1</div>
<div class="c" style="left:204px;top:55px;line-height:32.500px;height:32.500px">Iterator var4 = </div>
<div class="c k" style="left:380px;top:55px;line-height:32.500px;height:32.500px">this</div>
<div class="c" style="left:424px;top:55px;line-height:32.500px;height:32.500px">.</div>
<div class="c f" style="left:435px;top:55px;line-height:32.500px;height:32.500px">memberValues</div>
<div class="c" style="left:567px;top:55px;line-height:32.500px;height:32.500px">.entrySet().iterator();</div>
<div class="c h" style="left:847px;top:55px;line-height:32.500px;height:32.500px">memberValues:  size = 1</div>
<div class="c h" style="left:1142px;top:55px;line-height:32.500px;height:32.500px">var4 (slot_4): AbstractInputCheckedMapDecorator$EntrySetIterator@657</div>
<div class="c k" style="left:204px;top:120px;line-height:32.500px;height:32.500px">while</div>
<div class="c" style="left:270px;top:120px;line-height:32.500px;height:32.500px">(var4.hasNext()) {</div>
<div class="c" style="left:248px;top:153px;line-height:32.500px;height:32.500px">Map.Entry var5 = (Map.Entry) var4.next();</div>
<div class="c h" style="left:726px;top:153px;line-height:32.500px;height:32.500px">var5 (slot_5): "value" -&gt; "test"</div>
<div class="c h" style="left:1120px;top:153px;line-height:32.500px;height:32.500px">var4 (slot_4): AbstractInputCheckedMapDecorator$EntrySetIterator@657</div>
<div class="c" style="left:248px;top:185px;line-height:32.500px;height:32.500px">String var6 = (String) var5.getKey();</div>
<div class="c h" style="left:682px;top:185px;line-height:32.500px;height:32.500px">var6 (slot_6): "value"</div>
<div class="c" style="left:248px;top:218px;line-height:32.500px;height:32.500px">Class var7 = (Class) var3.get(var6);</div>
<div class="c h" style="left:671px;top:218px;line-height:32.500px;height:32.500px">var7 (slot_7): "class [Ljava.lang.annotation.ElementType;"</div>
<div class="c h" style="left:1352px;top:218px;line-height:32.500px;height:32.500px">var3 (slot_3):  size = 1</div>
<div class="c k" style="left:248px;top:250px;line-height:32.500px;height:32.500px">if</div>
<div class="c" style="left:281px;top:250px;line-height:32.500px;height:32.500px">(var7 != </div>
<div class="c k" style="left:380px;top:250px;line-height:32.500px;height:32.500px">null</div>
<div class="c" style="left:424px;top:250px;line-height:32.500px;height:32.500px">) {</div>
<div class="c" style="left:292px;top:283px;line-height:32.500px;height:32.500px">Object var8 = var5.getValue();</div>
<div class="c h" style="left:649px;top:283px;line-height:32.500px;height:32.500px">var8 (slot_8): "test"</div>
<div class="c k" style="left:292px;top:315px;line-height:32.500px;height:32.500px">if</div>
<div class="c" style="left:325px;top:315px;line-height:32.500px;height:32.500px">(!var7.isInstance(var8) &amp;&amp; !(var8 </div>
<div class="c k" style="left:699px;top:315px;line-height:32.500px;height:32.500px">instanceof</div>
<div class="c" style="left:820px;top:315px;line-height:32.500px;height:32.500px">ExceptionProxy)) {</div>
<div class="c h" style="left:1045px;top:315px;line-height:32.500px;height:32.500px">var7 (slot_7): "class [Ljava.lang.annotation.ElementType;"</div>
<div class="c" style="left:336px;top:348px;line-height:32.500px;height:32.500px;color:#fff">var5.setValue((new AnnotationTypeMismatchExceptionProxy(</div>
<div class="c" style="left:983px;top:348px;line-height:32.500px;height:32.500px;color:#fff">var8.getClass() + "[" + var8 + "]")).setMember(var2.members().get(var6)));</div>
<div class="c" style="left:292px;top:380px;line-height:32.500px;height:32.500px">}</div>
<div class="c" style="left:248px;top:413px;line-height:32.500px;height:32.500px">}</div>
<div class="c" style="left:204px;top:445px;line-height:32.500px;height:32.500px">}</div>
<div class="abs" style="left:953.7px;top:350.1px;width:26.100px;height:27.600px;border-radius:4.500px;background:#90a9d3"></div>
<div class="t" style="left:960.5px;top:351.8px;font-size:16.500px;color:#84847f;letter-spacing:.3px">s:</div>
<div class="abs" style="left:116px;top:483px;width:346px;height:10.500px;background:#e4e4e4;border:1px solid #dadada"></div>
<div class="abs" style="left:1400px;top:438px;width:12px;height:44px;background:#e6e6e6;border:1px solid #dcdcdc"></div>
<div class="abs" style="left:1395px;top:454.29999999999995px;width:17px;height:2px;background:#f7c5c5"></div>
<div class="abs" style="left:1395px;top:461.29999999999995px;width:17px;height:2px;background:#f7c5c5"></div>
<div class="abs" style="left:1395px;top:470.29999999999995px;width:17px;height:2px;background:#f7c5c5"></div>
<div class="abs" style="left:1395px;top:474.5px;width:17px;height:2.500px;background:#2b5aa8"></div>
</div>
<!-- ===== DEBUG PANEL ===== -->
<div id="dtop" class="abs"></div>
<div id="dhead" class="abs">
<div class="t b" style="left:15px;top:13.5px;letter-spacing:.75px">Debug</div>
<svg style="left:105px;top:15px" width="22" height="20" viewBox="0 0 22 20" fill="none"><rect x="1.700" y="3.700" width="16.500" height="14" rx="2.500" fill="#e4ecfd" stroke="#4682fa" stroke-width="1.300"/><path d="M4.500 7.500h2M8 7.500h2" stroke="#4682fa" stroke-width="1.300"/><circle cx="17.200" cy="4" r="3.700" fill="#5fad72"/></svg>
<div class="t" style="left:130px;top:13.5px">payload3</div>
<svg style="left:217.5px;top:22px" width="10" height="10" viewBox="0 0 10 10" stroke="#9096a2" stroke-width="1.200" fill="none" stroke-linecap="round"><path d="M1 1 9 9M9 1 1 9"/></svg>
<div class="abs" style="left:91px;top:47.89999999999998px;width:149px;height:4.200px;border-radius:2.100px;background:#4083d6;z-index:2"></div>
<svg style="left:1756px;top:18px" width="6" height="16" viewBox="0 0 6 16" fill="#6c707e"><circle cx="3" cy="2" r="1.300"/><circle cx="3" cy="8" r="1.300"/><circle cx="3" cy="14" r="1.300"/></svg>
<div class="abs" style="left:1784px;top:25.200000000000045px;width:16px;height:1.200px;background:#6c707e"></div>
</div>
<div id="dheadline" class="abs"></div>
<div id="dtool" class="abs">
<div class="t" style="left:17.5px;top:9.5px;letter-spacing:.05px">Threads &amp; Variables</div>
<div class="t" style="left:203.5px;top:9.5px">Console</div>
<div class="abs" style="left:0;top:41.5px;width:188px;height:2.500px;background:#3d82d6;z-index:2"></div>
<svg style="left:290px;top:11px" width="22" height="22" viewBox="0 0 22 22" fill="none" stroke="#6c707e" stroke-width="1.400" stroke-linecap="round" stroke-linejoin="round"><path d="M8.500 17A7.300 7.300 0 1 1 14.800 6.300"/><path d="M15.500 1.800v4.800h-4.800"/><g stroke="#3c9a4b"><ellipse cx="15" cy="15.800" rx="2.600" ry="3.300"/><path d="M13.400 12.600l-1-1M16.600 12.600l1-1M12.400 15.800h-1.800M17.600 15.800h1.800M12.800 18.300l-1.400 1.200M17.200 18.300l1.400 1.200"/></g></svg>
<div class="abs" style="left:324.5px;top:14.5px;width:15px;height:15px;border-radius:3px;border:1.500px solid #e55765;background:#ffeff0"></div>
<div class="abs" style="left:352px;top:10.5px;width:1px;height:23px;background:#d1d1d1"></div>
<svg style="left:363px;top:13px" width="20" height="18" viewBox="0 0 20 18" fill="none" stroke="#3c9a4b" stroke-width="1.400" stroke-linejoin="round"><rect x="1.200" y="2" width="3" height="14" rx=".8"/><path d="M8.500 2.300 18.500 9 8.500 15.700z"/></svg>
<svg style="left:398px;top:13px" width="14" height="18" viewBox="0 0 14 18" fill="none" stroke="#c2c2c2" stroke-width="1.300"><rect x="1.200" y="2" width="3.300" height="14" rx=".8"/><rect x="9" y="2" width="3.300" height="14" rx=".8"/></svg>
<svg style="left:429px;top:13px" width="18" height="18" viewBox="0 0 18 18" fill="none" stroke="#6c707e" stroke-width="1.400" stroke-linecap="round" stroke-linejoin="round"><path d="M1.500 11.800 6.500 5 15.500 10.800"/><path d="M16 5.500v5.800h-5.800"/><path d="M1.500 16.800h15"/></svg>
<svg style="left:461px;top:13px" width="18" height="18" viewBox="0 0 18 18" fill="none" stroke="#6c707e" stroke-width="1.400" stroke-linecap="round" stroke-linejoin="round"><path d="M9 1.500v11.500M4 8.200l5 5 5-5M1.500 16.800h15"/></svg>
<svg style="left:494px;top:13px" width="18" height="18" viewBox="0 0 18 18" fill="none" stroke="#6c707e" stroke-width="1.400" stroke-linecap="round" stroke-linejoin="round"><path d="M9 13.500V2M4 6.800l5-5 5 5M1.500 16.800h15"/></svg>
<div class="abs" style="left:523px;top:10.5px;width:1px;height:23px;background:#d1d1d1"></div>
<svg style="left:535px;top:12px" width="20" height="20" viewBox="0 0 20 20" fill="#fff0f1" stroke="#e55765" stroke-width="1.400"><circle cx="11.800" cy="7.300" r="5.300"/><circle cx="6.800" cy="12.500" r="5.300"/></svg>
<svg style="left:568px;top:12px" width="20" height="20" viewBox="0 0 20 20" fill="none" stroke="#e55765" stroke-width="1.400" stroke-linecap="round"><path d="M5 5.200A6.300 6.300 0 0 0 4.500 13.800M15 14.800A6.300 6.300 0 0 0 15.500 6.200" /><path d="M7.500 3.800A6.300 6.300 0 0 1 13 4.300M12.500 16.200A6.300 6.300 0 0 1 7 15.700"/><path d="M2.500 16.500 17.500 3" stroke="#6c707e"/></svg>
<svg style="left:606px;top:14px" width="6" height="16" viewBox="0 0 6 16" fill="#6c707e"><circle cx="3" cy="2" r="1.300"/><circle cx="3" cy="8" r="1.300"/><circle cx="3" cy="14" r="1.300"/></svg>
<svg style="left:1795px;top:14px" width="18" height="17" viewBox="0 0 18 17" fill="none" stroke="#6c707e" stroke-width="1.400"><rect x="1.200" y="1.200" width="15.500" height="14.500" rx="2.500"/><path d="M7.500 1.200v14.500M7.500 7.500h9"/></svg>
</div>
<div id="dtoolline" class="abs"></div>
<div id="dbody" class="abs">
<svg style="left:12px;top:9px" width="19" height="17" viewBox="0 0 19 17" fill="none" stroke="#f26522" stroke-width="3" stroke-linejoin="miter"><path d="M1.500 8.500 6.500 13.500 17 2.500" stroke="#f4814a"/></svg>
<div class="t" style="left:35px;top:5.5px;letter-spacing:-.18px">"main"@1 in g...ain": RUNNING</div>
<svg style="left:295px;top:9px" width="18" height="18" viewBox="0 0 18 18" fill="none" stroke="#6c707e" stroke-width="1.400" stroke-linejoin="round"><path d="M1.800 2h14.400L10.500 9.300V16L7.500 14V9.300z"/></svg>
<svg style="left:337px;top:15px" width="12" height="8" viewBox="0 0 12 8" fill="none" stroke="#6c707e" stroke-width="1.400" stroke-linecap="round" stroke-linejoin="round"><path d="M1 1.500 6 6.500 11 1.500"/></svg>
<div class="abs" style="left:0;top:35px;width:360px;height:28px;background:#d4d4d4"></div>
<div class="abs" style="left:0;top:63px;width:360px;height:150px;background:#ffffe4"></div>
<div class="abs" style="left:0;top:36px;width:360px;height:177px;overflow:hidden">
<div class="t" style="left:33.5px;top:1.60px;color:#000;height:26px;line-height:26px;letter-spacing:.16px">readObject:451, AnnotationInvocationHandler <i>(sun.reflect.annotation)</i></div>
<div class="t" style="left:33.5px;top:27.82px;color:#999;height:26px;line-height:26px;letter-spacing:.16px">invoke0:-1, NativeMethodAccessorImpl <i>(sun.reflect)</i></div>
<div class="t" style="left:33.5px;top:54.04px;color:#999;height:26px;line-height:26px;letter-spacing:.16px">invoke:62, NativeMethodAccessorImpl <i>(sun.reflect)</i></div>
<div class="t" style="left:33.5px;top:80.26px;color:#999;height:26px;line-height:26px;letter-spacing:.16px">invoke:43, DelegatingMethodAccessorImpl <i>(sun.reflect)</i></div>
<div class="t" style="left:33.5px;top:106.48px;color:#999;height:26px;line-height:26px;letter-spacing:.16px">invoke:497, Method <i>(java.lang.reflect)</i></div>
<div class="t" style="left:33.5px;top:132.70px;color:#999;height:26px;line-height:26px;letter-spacing:.16px">invokeReadObject:1058, ObjectStreamClass <i>(java.io)</i></div>
<div class="t" style="left:33.5px;top:158.92px;color:#999;height:26px;line-height:26px;letter-spacing:.16px">readSerialData:1900, ObjectInputStream <i>(java.io)</i></div>
</div>
<div class="abs" style="left:348px;top:37.5px;width:11px;height:90px;background:rgba(170,170,170,.42);border:1px solid rgba(150,150,150,.25)"></div>
<div class="abs" style="left:0;top:200.29999999999995px;width:203px;height:10.600px;background:rgba(160,160,150,.35)"></div>
<div class="abs" style="left:0;top:213px;width:360px;height:27px;background:#f2f2f2"></div>
<div class="t" style="left:10px;top:214.5px;color:#7a7a7a;font-size:14.500px;letter-spacing:.040px">Switch frames from anywhere in the IDE with Ctrl..</div>
<svg style="left:340.5px;top:222px" width="10" height="10" viewBox="0 0 10 10" stroke="#9096a2" stroke-width="1.100" fill="none" stroke-linecap="round"><path d="M.8.800 9.200 9.200M9.200.8.800 9.200"/></svg>
<div class="abs" style="left:360px;top:0;width:1px;height:240px;background:#d1d1d1"></div>
<div class="t mono" style="left:371.5px;top:7.2000000000000455px;color:#a3a3a3;font-size:18.200px;letter-spacing:-.960px">Evaluate expression (Enter) or add a watch (Ctrl+Shift+Enter)</div>
<svg style="left:1754px;top:10px" width="20" height="20" viewBox="0 0 20 20" fill="none" stroke="#9ea1aa" stroke-width="1.500" stroke-linecap="round"><path d="M7.500 2v11M2 7.500h11"/><circle cx="10.500" cy="15.800" r="2"/><circle cx="15.800" cy="15.800" r="2"/></svg>
<svg style="left:1794px;top:16px" width="12" height="8" viewBox="0 0 12 8" fill="none" stroke="#6c707e" stroke-width="1.400" stroke-linecap="round" stroke-linejoin="round"><path d="M1 1.500 6 6.500 11 1.500"/></svg>
<div class="abs" style="left:361px;top:34.299999999999955px;width:1457px;height:2px;background:#cfcfcf;z-index:3"></div>
<div class="abs" style="left:0;top:36px;width:1818px;height:204px;overflow:hidden">
<svg style="left:415px;top:-9.0px" width="18" height="18" viewBox="0 0 18 18" fill="#fff4eb" stroke="#e8823a" stroke-width="1.300"><circle cx="9" cy="9" r="8"/><path d="M9 5v8" stroke-width="1.500"/></svg>
<div class="t" style="left:438px;top:-12.5px"><span class="vn">inherited</span> = false</div>
<svg style="left:370.5px;top:20.3px" width="11" height="7" viewBox="0 0 11 7" fill="none" stroke="#6c707e" stroke-width="1.400" stroke-linecap="round" stroke-linejoin="round"><path d="M1 1 5.500 5.500 10 1"/></svg>
<svg style="left:395px;top:15.5px" width="15" height="18" viewBox="0 0 15 18" fill="#fff8e6" stroke="#cf9a3a" stroke-width="1.300"><rect x="1.300" y="1" width="11.200" height="3.200" rx=".6"/><rect x="1.300" y="7.200" width="11.200" height="3.200" rx=".6"/><rect x="1.300" y="13.400" width="11.200" height="3.200" rx=".6"/></svg>
<div class="t" style="left:415.5px;top:12.5px;letter-spacing:0.1px;"><span class="vn">var3 (slot_3)</span> = <span class="g">{HashMap@638}</span>  size = 1</div>
<svg style="left:395.5px;top:43.3px" width="7" height="11" viewBox="0 0 7 11" fill="none" stroke="#6c707e" stroke-width="1.400" stroke-linecap="round" stroke-linejoin="round"><path d="M1 1 5.500 5.500 1 10"/></svg>
<svg style="left:417.5px;top:40.5px" width="15" height="18" viewBox="0 0 15 18" fill="#fff8e6" stroke="#cf9a3a" stroke-width="1.300"><rect x="1.300" y="1" width="11.200" height="3.200" rx=".6"/><rect x="1.300" y="7.200" width="11.200" height="3.200" rx=".6"/><rect x="1.300" y="13.400" width="11.200" height="3.200" rx=".6"/></svg>
<div class="t" style="left:438.5px;top:37.5px;letter-spacing:0.18px;"><span class="vs">"value"</span> <span class="g">-&gt; {Class@647}</span> "class [Ljava.lang.annotation.ElementType;"</div>
<svg style="left:372.5px;top:68.3px" width="7" height="11" viewBox="0 0 7 11" fill="none" stroke="#6c707e" stroke-width="1.400" stroke-linecap="round" stroke-linejoin="round"><path d="M1 1 5.500 5.500 1 10"/></svg>
<svg style="left:395px;top:65.5px" width="15" height="18" viewBox="0 0 15 18" fill="#fff8e6" stroke="#cf9a3a" stroke-width="1.300"><rect x="1.300" y="1" width="11.200" height="3.200" rx=".6"/><rect x="1.300" y="7.200" width="11.200" height="3.200" rx=".6"/><rect x="1.300" y="13.400" width="11.200" height="3.200" rx=".6"/></svg>
<div class="t" style="left:415.5px;top:62.5px;letter-spacing:0.2px;"><span class="vn">var4 (slot_4)</span> = <span class="g">{AbstractInputCheckedMapDecorator$EntrySetIterator@657}</span></div>
<svg style="left:372.5px;top:93.3px" width="7" height="11" viewBox="0 0 7 11" fill="none" stroke="#6c707e" stroke-width="1.400" stroke-linecap="round" stroke-linejoin="round"><path d="M1 1 5.500 5.500 1 10"/></svg>
<svg style="left:395px;top:90.5px" width="15" height="18" viewBox="0 0 15 18" fill="#fff8e6" stroke="#cf9a3a" stroke-width="1.300"><rect x="1.300" y="1" width="11.200" height="3.200" rx=".6"/><rect x="1.300" y="7.200" width="11.200" height="3.200" rx=".6"/><rect x="1.300" y="13.400" width="11.200" height="3.200" rx=".6"/></svg>
<div class="t" style="left:415.5px;top:87.5px;letter-spacing:0.25px;"><span class="vn">var5 (slot_5)</span> = <span class="g">{AbstractInputCheckedMapDecorator$MapEntry@658}</span> <span class="vs">"value"</span> <span class="g">-&gt;</span> <span class="vs">"test"</span></div>
<svg style="left:372.5px;top:118.3px" width="7" height="11" viewBox="0 0 7 11" fill="none" stroke="#6c707e" stroke-width="1.400" stroke-linecap="round" stroke-linejoin="round"><path d="M1 1 5.500 5.500 1 10"/></svg>
<svg style="left:395px;top:115.5px" width="15" height="18" viewBox="0 0 15 18" fill="#fff8e6" stroke="#cf9a3a" stroke-width="1.300"><rect x="1.300" y="1" width="11.200" height="3.200" rx=".6"/><rect x="1.300" y="7.200" width="11.200" height="3.200" rx=".6"/><rect x="1.300" y="13.400" width="11.200" height="3.200" rx=".6"/></svg>
<div class="t" style="left:415.5px;top:112.5px;letter-spacing:0.2px;"><span class="vn">var6 (slot_6)</span> = <span class="vs">"value"</span></div>
<svg style="left:372.5px;top:143.3px" width="7" height="11" viewBox="0 0 7 11" fill="none" stroke="#6c707e" stroke-width="1.400" stroke-linecap="round" stroke-linejoin="round"><path d="M1 1 5.500 5.500 1 10"/></svg>
<svg style="left:395px;top:140.5px" width="15" height="18" viewBox="0 0 15 18" fill="#fff8e6" stroke="#cf9a3a" stroke-width="1.300"><rect x="1.300" y="1" width="11.200" height="3.200" rx=".6"/><rect x="1.300" y="7.200" width="11.200" height="3.200" rx=".6"/><rect x="1.300" y="13.400" width="11.200" height="3.200" rx=".6"/></svg>
<div class="t" style="left:415.5px;top:137.5px;letter-spacing:0.1px;"><span class="vn">var7 (slot_7)</span> = <span class="g">{Class@647}</span> "class [Ljava.lang.annotation.ElementType;" <span style="color:#7aa7e6">... Navigate</span></div>
<div class="abs" style="left:369.5px;top:162.0px;width:1434px;height:25px;border-radius:5px;background:#2675bf"></div>
<svg style="left:372.5px;top:168.3px" width="7" height="11" viewBox="0 0 7 11" fill="none" stroke="#fff" stroke-width="1.400" stroke-linecap="round" stroke-linejoin="round"><path d="M1 1 5.500 5.500 1 10"/></svg>
<svg style="left:395px;top:165.5px" width="15" height="18" viewBox="0 0 15 18" fill="#fff8e6" stroke="#cf9a3a" stroke-width="1.300"><rect x="1.300" y="1" width="11.200" height="3.200" rx=".6"/><rect x="1.300" y="7.200" width="11.200" height="3.200" rx=".6"/><rect x="1.300" y="13.400" width="11.200" height="3.200" rx=".6"/></svg>
<div class="t" style="left:415.5px;top:162.5px;letter-spacing:0.2px;color:#fff">var8 (slot_8) = "test"</div>
</div>
<div class="abs" style="left:1805px;top:141.5px;width:11.500px;height:98px;background:#e4e4e4;border:1px solid #dcdcdc"></div>
<div class="abs" style="left:361px;top:228px;width:1244px;height:12px;background:#e4e4e4;border:1px solid #dcdcdc"></div>
</div>
<!-- ===== STATUS BAR ===== -->
<div id="sline" class="abs"></div>
<div id="status" class="abs">
<div class="abs" style="left:18px;top:13.5px;width:9.500px;height:9.500px;border-radius:2.500px;border:1.500px solid #3574f0;background:#e7effd"></div>
<div class="t" style="left:33px;top:4.5px">rt.jar</div>
<svg style="left:78.5px;top:12px" width="8" height="12" viewBox="0 0 8 12" fill="none" stroke="#7d818d" stroke-width="1.300" stroke-linecap="round" stroke-linejoin="round"><path d="M1.500 1.500 6.500 6 1.500 10.500"/></svg>
<div class="t" style="left:98px;top:4.5px">sun</div>
<svg style="left:136.5px;top:12px" width="8" height="12" viewBox="0 0 8 12" fill="none" stroke="#7d818d" stroke-width="1.300" stroke-linecap="round" stroke-linejoin="round"><path d="M1.500 1.500 6.500 6 1.500 10.500"/></svg>
<div class="t" style="left:156px;top:4.5px">reflect</div>
<svg style="left:216.5px;top:12px" width="8" height="12" viewBox="0 0 8 12" fill="none" stroke="#7d818d" stroke-width="1.300" stroke-linecap="round" stroke-linejoin="round"><path d="M1.500 1.500 6.500 6 1.500 10.500"/></svg>
<div class="t" style="letter-spacing:0.36px;left:236px;top:4.5px">annotation</div>
<svg style="left:331.5px;top:12px" width="8" height="12" viewBox="0 0 8 12" fill="none" stroke="#7d818d" stroke-width="1.300" stroke-linecap="round" stroke-linejoin="round"><path d="M1.500 1.500 6.500 6 1.500 10.500"/></svg>
<svg style="left:352px;top:8.5px" width="18" height="18" viewBox="0 0 18 18" fill="none"><circle cx="9" cy="9" r="8.200" fill="#edf3ff" stroke="#4d88fa" stroke-width="1.150"/><path d="M11.850 6.600A3.750 3.750 0 1 0 11.850 11.400" stroke="#4d88fa" stroke-width="1.300" fill="none"/></svg>
<div class="t" style="left:376px;top:4.5px">AnnotationInvocationHandler</div>
<div class="t" style="letter-spacing:-0.5px;left:1636px;top:4.5px">342:1</div>
<div class="t" style="letter-spacing:-1.1px;left:1698px;top:4.5px;color:#8c8c8c">CRLF</div>
<div class="t" style="left:1759px;top:4.5px;color:#8c8c8c">UTF-8</div>
<div class="t" style="letter-spacing:0.12px;left:1828px;top:4.5px">4 spaces</div>
<div class="abs" style="left:0;top:37px;width:1920px;height:1px;background:#b9bdb0"></div>
</div>
</body>
</html>
